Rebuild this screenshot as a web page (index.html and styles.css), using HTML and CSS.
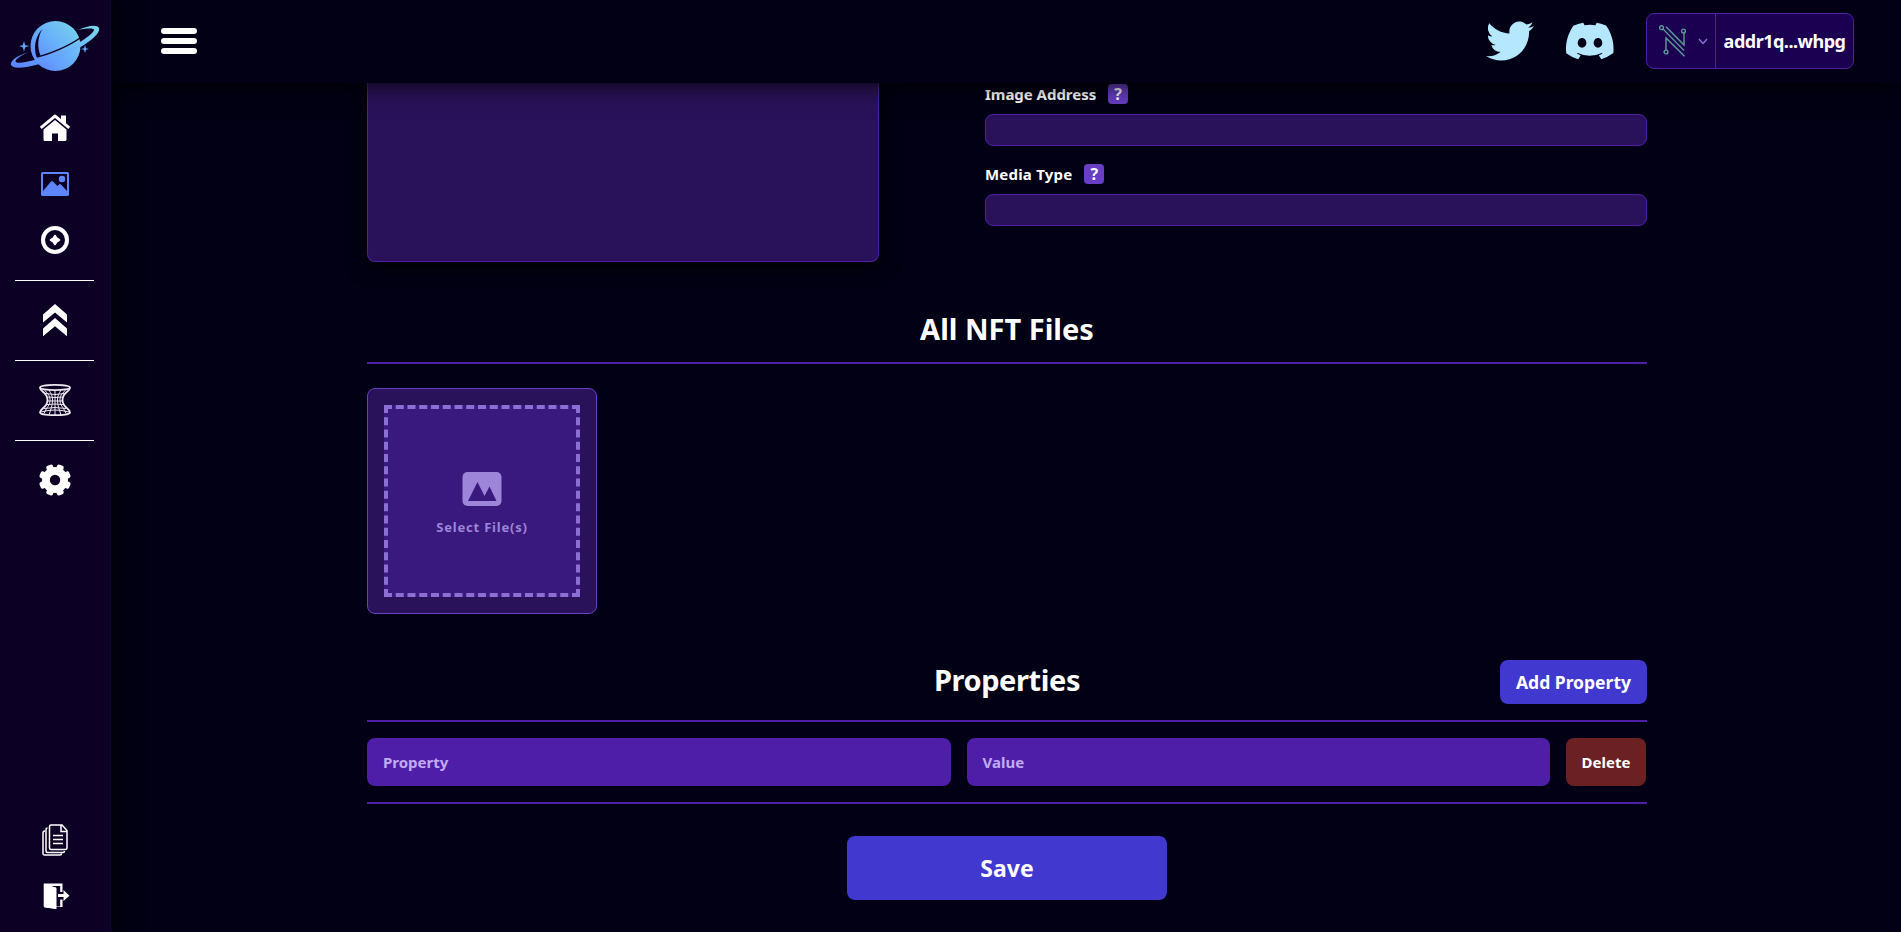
FILE: index.html
```html
<!DOCTYPE html>
<html lang="en">
<head>
<meta charset="utf-8">
<title>NFT Editor</title>
<link rel="stylesheet" href="styles.css">
</head>
<body>
<div class="app">
  <aside class="sidebar">
    <svg class="logo" viewBox="0 0 90 52" width="90" height="52">
      <defs><linearGradient id="sky" x1="0" y1="1" x2="1" y2="0"><stop offset="0" stop-color="#5c80ff"/><stop offset=".5" stop-color="#68aefc"/><stop offset="1" stop-color="#7ad8e8"/></linearGradient></defs>
      <circle cx="45.500" cy="26" r="25" fill="url(#sky)"/>
      <path d="M32.500 9C25 17 23.500 27 26.500 37L30.500 35.500C27 27 27.500 17 32.500 9Z" fill="#0c0024"/>
      <path d="M19 32C6 36 0 41 1 45C4 51 25 47 52 36C76 26 91 14 89 8C87 4 77 6 68 10C77 8 84 8 84 10C83 14 71 23 51 31C31 39 9 45 6 42C4 40 10 36 19 32Z" fill="url(#sky)"/>
      <path d="M27 37C40 34 59 26 70 18" fill="none" stroke="#0c0024" stroke-width="1.500"/>
      <path d="M14 21l1.200 4.200L19.500 26l-4.300 1.200L14 31.500l-1.200-4.300L9 26l3.800-.8ZM75 25l1 3.200 3 .8-3 .8-1 3.200-1-3.200-3-.8 3-.8Z" fill="#68a8fb"/>
    </svg>
    <nav class="nav">
      <a class="nav-item"><svg width="32" height="32" viewBox="0 -1 32 32" fill="#fff"><path d="M.8 13.800L14.600 2.200a2.200 2.200 0 0 1 2.800 0L22 6V2.500h5v7.700l4.200 3.600-1.900 2.300L16 5 2.700 16.100Z"/><path d="M4.500 16.400L16 6.900l11.500 9.500v10.100a1.500 1.500 0 0 1-1.500 1.500h-7v-7.500h-6V28H6a1.500 1.500 0 0 1-1.500-1.500Z"/></svg></a>
      <a class="nav-item"><svg width="32" height="32" viewBox="0 0 32 32" fill="#5c86fa"><path fill-rule="evenodd" d="M3.500 4h25A1.500 1.500 0 0 1 30 5.500v21a1.500 1.500 0 0 1-1.500 1.500h-25A1.500 1.500 0 0 1 2 26.500v-21A1.500 1.500 0 0 1 3.500 4ZM4 6v17l8-9.500a1.500 1.500 0 0 1 2 0l4.500 4.500 1.500-1.500a1.500 1.500 0 0 1 2 0l6 6.500V6Z"/><circle cx="23" cy="11" r="3.200"/></svg></a>
      <a class="nav-item"><svg width="32" height="32" viewBox="0 0 32 32"><circle cx="16" cy="16" r="12" fill="none" stroke="#fff" stroke-width="4"/><path d="M16 11.500l1.900 2.600 2.600 1.900-2.600 1.900-1.900 2.600-1.900-2.600-2.600-1.900 2.600-1.900Z" fill="#fff" stroke="#fff" stroke-width="1.600" stroke-linejoin="round"/></svg></a>
      <hr class="nav-line">
      <a class="nav-item"><svg width="32" height="32" viewBox="0 0 32 32" fill="#fff"><path d="M16 0l12 10.500V18.500L16 8.500 4 18.500V10.500ZM16 14l12 10.500V32.300L16 22.300 4 32.300V24.500Z"/></svg></a>
      <hr class="nav-line">
      <a class="nav-item"><svg width="32" height="32" viewBox="0 0 32 32" fill="none" stroke="#eceaf0" stroke-width="1.200"><ellipse cx="16" cy="3.500" rx="15" ry="2.700" stroke-width="1.700"/><path d="M1 3.500C1 8 8.500 8 8.500 16S1 24 1 28.500c0 3.600 30 3.600 30 0 0-4.500-7.500-4.500-7.500-12.500S31 8 31 3.500" stroke-width="1.800"/><path d="M5 5c3 5 6 5 6 11s-3 6-6 13.500M10 6c2 4 3.500 5 3.500 10S12 25 10 31M16 6v25M22 6c-2 4-3.500 5-3.500 10S20 25 22 31M27 5c-3 5-6 5-6 11s3 6 6 13.500M6 9.500q10 2 20 0M8.500 13q7.500 1 15 0M8.500 17h15M8 20.500q8-1 16 0M5 24.500q11-2 22 0M2 28q14-4 28 0" stroke-width="1"/></svg></a>
      <hr class="nav-line">
      <a class="nav-item"><svg width="32" height="32" viewBox="0 0 32 32"><g fill="#fff"><circle cx="16" cy="16" r="13"/><rect x="12.500" y="0" width="7" height="32" rx="2" transform="rotate(22.500 16 16)"/><rect x="12.500" y="0" width="7" height="32" rx="2" transform="rotate(67.500 16 16)"/><rect x="12.500" y="0" width="7" height="32" rx="2" transform="rotate(112.500 16 16)"/><rect x="12.500" y="0" width="7" height="32" rx="2" transform="rotate(157.500 16 16)"/></g><circle cx="16" cy="16" r="5.200" fill="#0c0024"/></svg></a>
    </nav>
    <nav class="nav nav-bottom">
      <a class="nav-item"><svg width="32" height="32" viewBox="0 0 32 32" fill="none" stroke="#fff" stroke-width="1.500"><path d="M12 1h11l5 5.500V24a1.500 1.500 0 0 1-1.500 1.500H12A1.500 1.500 0 0 1 10.500 24V2.500A1.500 1.500 0 0 1 12 1ZM22 1v6.500h6M14 11.500h10M14 15.500h10M14 19.500h10M8.500 4C7 4 7 5 7 6v21a1.500 1.500 0 0 0 1.500 1.500H24c1 0 1.500-.5 1.500-1.500M6 7C4.500 7 4 8 4 9v20.500A1.500 1.500 0 0 0 5.500 31H21c1 0 1.500-.5 1.500-1.500"/></svg></a>
      <a class="nav-item"><svg width="32" height="32" viewBox="0 0 32 32" fill="#fff"><path d="M5 3.500h18.500V12h-2.300V6H11l6.500 2v18.500h3.700V19.500h2.300V27h-6v2L6 27.500a1.500 1.500 0 0 1-1.300-1.500V4Z"/><path d="M5 4l12 3.500V29L5 27ZM19 14h5.500v-4l6 5.700-6 5.300v-4H19Z"/></svg></a>
    </nav>
  </aside>
  <div class="page">
    <header class="topbar">
      <div class="burger"><span></span><span></span><span></span></div>
      <div class="actions">
        <svg class="twitter" width="48" height="48" viewBox="0 0 24 24" fill="#b5e7ff"><path d="M23.950 4.570a10 10 0 0 1-2.820.77 4.960 4.960 0 0 0 2.160-2.720 9.900 9.900 0 0 1-3.120 1.180 4.920 4.920 0 0 0-8.380 4.480C7.690 8.090 4.070 6.130 1.640 3.160a4.920 4.920 0 0 0 1.520 6.570 4.900 4.900 0 0 1-2.230-.61v.06a4.920 4.920 0 0 0 3.950 4.830 5 5 0 0 1-2.210.08 4.940 4.940 0 0 0 4.600 3.420A9.870 9.870 0 0 1 0 19.540a14 14 0 0 0 7.550 2.210c9.050 0 14-7.500 14-13.980 0-.21 0-.42-.02-.63a9.940 9.940 0 0 0 2.460-2.550Z"/></svg>
        <svg class="discord" width="48" height="48" viewBox="0 0 24 24" fill="#b5e7ff"><path d="M20.320 4.370a19.800 19.800 0 0 0-4.890-1.520.07.07 0 0 0-.08.040c-.21.380-.44.870-.61 1.250a18.270 18.270 0 0 0-5.490 0c-.16-.39-.4-.87-.61-1.250a.08.08 0 0 0-.08-.04 19.740 19.740 0 0 0-4.890 1.520C.53 9.050-.32 13.580.1 18.060c0 .02.010.040.030.050a19.900 19.900 0 0 0 5.990 3.030c.46-.63.870-1.300 1.230-1.990a13.100 13.100 0 0 1-1.870-.9c.12-.09.250-.19.370-.29a14.200 14.200 0 0 0 12.060 0c.12.100.250.200.370.290-.6.350-1.220.640-1.870.890.360.700.770 1.360 1.230 1.990a19.840 19.840 0 0 0 6.030-3.080c.5-5.180-.84-9.670-3.550-13.660ZM8.020 15.330c-1.180 0-2.160-1.080-2.160-2.420s.96-2.420 2.160-2.420c1.210 0 2.180 1.100 2.160 2.420 0 1.340-.96 2.420-2.160 2.420Zm7.970 0c-1.180 0-2.160-1.080-2.160-2.420s.96-2.420 2.160-2.420c1.210 0 2.180 1.100 2.160 2.420 0 1.340-.95 2.420-2.160 2.420Z"/></svg>
        <div class="wallet">
          <div class="wallet-kind">
            <svg width="28" height="34" viewBox="0 0 28 34" fill="none" stroke="#619b9c" stroke-width="1.400"><circle cx="2.500" cy="3.700" r="1.900"/><circle cx="24.500" cy="7" r="1.900"/><circle cx="7" cy="28" r="1.900"/><path d="M7 2.700L25 21V9M7 26V14L25.500 32.300"/><path d="M4 5L25 26.500" stroke-width="1.100"/></svg>
            <svg width="10" height="7" viewBox="0 0 10 7" fill="none" stroke="#8f76d8" stroke-width="1.300"><path d="M1 1l4 4.500L9 1"/></svg>
          </div>
          <div class="wallet-address">addr1q...whpg</div>
        </div>
      </div>
    </header>
    <main class="content">
      <section class="top-row">
        <div class="preview"></div>
        <div class="fields">
          <div class="label"><span class="label-address">Image Address</span><span class="help">?</span></div>
          <div class="input"></div>
          <div class="label"><span class="label-media">Media Type</span><span class="help">?</span></div>
          <div class="input"></div>
        </div>
      </section>
      <section class="files-head"><h2>All NFT Files</h2></section>
      <div class="file-card">
        <div class="dropzone">
          <svg width="40" height="34" viewBox="0 0 40 34"><rect x=".5" width="39" height="34" rx="5" fill="#9d85d9"/><path d="M6 29L15.500 10 22.500 24 27.500 14.500 34.500 29Z" fill="#3a197f"/></svg>
          <span>Select File(s)</span>
        </div>
      </div>
      <section class="props-head"><h2>Properties</h2><button class="btn add">Add Property</button></section>
      <div class="prop-row">
        <div class="prop-input"><span>Property</span></div>
        <div class="prop-input"><span>Value</span></div>
        <button class="delete">Delete</button>
      </div>
      <button class="btn save">Save</button>
    </main>
  </div>
</div>
</body>
</html>
```
FILE: styles.css
```css
* { box-sizing: border-box; }
body { margin: 0; background: #020014; color: #fff; font-family: "Noto Sans", "Open Sans", sans-serif; font-weight: 700; overflow: hidden; }
button { font: inherit; color: #fff; border: 0; padding: 0; }
h2, hr { margin: 0; }
.app { display: flex; height: 932px; }

.sidebar { width: 111px; flex: none; height: 100%; padding: 20px 0; background: #0c0024; border-right: 1px solid #12023a; display: flex; flex-direction: column; align-items: center; box-shadow: 0 0 24px #000; z-index: 3; }
.logo { flex: none; }
.nav { display: flex; flex-direction: column; align-items: center; gap: 24px; margin-top: 40px; }
.nav-item { height: 32px; }
.nav-item svg { display: block; overflow: visible; }
.nav-line { width: 79px; height: 1px; border: 0; background: #fff; margin: 0 1px -1px 0; }
.nav-bottom { margin-top: auto; }

.page { flex: 1; min-width: 0; display: flex; flex-direction: column; }
.topbar { height: 83px; flex: none; background: #020014; box-shadow: 0 0 24px #000; z-index: 2; display: flex; justify-content: space-between; align-items: center; padding: 0 47px 1px 50px; }
.burger { display: flex; flex-direction: column; gap: 4px; width: 36px; }
.burger span { height: 6px; border-radius: 3px; background: #fff; }
.actions { display: flex; align-items: center; }
.twitter { margin-right: 32px; }
.discord { margin-right: 32px; }
.wallet { width: 208px; height: 56px; display: flex; background: #1b0052; border: 1px solid #4e1ea8; border-radius: 8px; }
.wallet-kind { width: 69px; display: flex; align-items: center; gap: 11px; padding-left: 12px; border-right: 1px solid #4e1ea8; }
.wallet-address { flex: 1; display: flex; align-items: center; justify-content: center; font-size: 18px; letter-spacing: -.5px; white-space: nowrap; }

.content { width: 1280px; margin-left: 256px; display: flex; flex-direction: column; }
.top-row { display: flex; justify-content: space-between; }
.preview { width: 512px; height: 179px; background: #2a125a; border: 1px solid #4e1ea8; border-top: 0; border-radius: 0 0 8px 8px; box-shadow: 0 4px 20px #000; }
.fields { width: 662px; padding-top: 1px; }
.label { height: 20px; display: flex; align-items: center; gap: 12px; margin-bottom: 10px; font-size: 15px; }
.label-address { letter-spacing: -.03px; }
.label-media { letter-spacing: .2px; }
.help { width: 20px; height: 20px; border-radius: 4px; background: #673ec4; font-size: 16px; display: flex; align-items: center; justify-content: center; }
.input { height: 32px; border: 1px solid #4e1ea8; border-radius: 8px; background: #2a125a; margin-bottom: 18px; }
.files-head { height: 102px; display: flex; justify-content: center; align-items: flex-end; border-bottom: 2px solid #4e1ea8; padding-bottom: 12px; }
h2 { font-size: 29px; line-height: 42px; }
.file-card { width: 230px; height: 226px; margin-top: 24px; padding: 16px; border: 1px solid #673ec4; border-radius: 8px; background: #2a125a; display: flex; }
.dropzone { flex: 1; border: 4px dashed #8c6fd3; background: #3a197f; display: flex; flex-direction: column; align-items: center; padding-top: 63px; gap: 12px; color: #9d85d9; font-size: 13px; line-height: 19px; letter-spacing: .8px; }
.props-head { height: 62px; margin-top: 46px; border-bottom: 2px solid #4e1ea8; display: grid; grid-template-columns: 1fr auto 1fr; align-items: start; }
.props-head h2 { grid-column: 2; line-height: 40px; letter-spacing: -.4px; }
.btn { background: #4138d0; border-radius: 8px; }
.add { width: 147px; height: 44px; justify-self: end; font-size: 17.500px; }
.prop-row { display: flex; gap: 16px; height: 82px; padding: 16px 1px 16px 0; border-bottom: 2px solid #4e1ea8; }
.prop-input { flex: 1; display: flex; align-items: center; padding-left: 16px; border-radius: 8px; background: #4e1ea8; color: #c3abf3; font-size: 15px; }
.delete { width: 80px; border-radius: 8px; background: #6b2123; font-size: 15px; }
.save { width: 320px; height: 64px; margin: 32px auto 0; font-size: 23px; }
```
